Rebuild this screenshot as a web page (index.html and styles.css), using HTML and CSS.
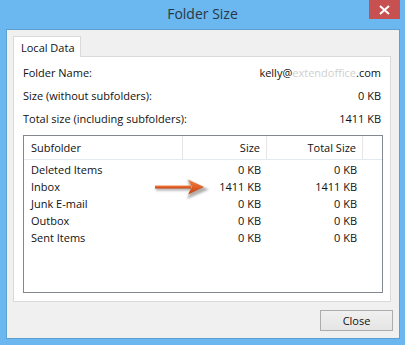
FILE: index.html
```html
<!DOCTYPE html>
<html lang="en">
<head>
  <meta charset="UTF-8">
  <title>Folder Size</title>
  <link rel="stylesheet" href="styles.css">
</head>
<body>
  <div class="window">
    <div class="titlebar">
      <span></span>
      <div class="title">Folder Size</div>
      <div class="close-x">
        <svg width="11" height="10" viewBox="0 0 11 10"><path d="M1 1 L10 9 M10 1 L1 9" stroke="#fff" stroke-width="2"/></svg>
      </div>
    </div>

    <div class="client">
      <div class="tabs">
        <div class="tab">Local Data</div>
      </div>
      <div class="panel">
        <div class="info-row"><span>Folder Name:</span><span>kelly@<span class="mark">extendoffice</span>.com</span></div>
        <div class="info-row"><span>Size (without subfolders):</span><span>0 KB</span></div>
        <div class="info-row"><span>Total size (including subfolders):</span><span>1411 KB</span></div>

        <div class="listview">
          <div class="lv-head">
            <div class="hcell">Subfolder</div>
            <div class="hcell num">Size</div>
            <div class="hcell num">Total Size</div>
            <div class="hcell"></div>
          </div>
          <div class="lv-row first"><div>Deleted Items</div><div class="num">0 KB</div><div class="num">0 KB</div></div>
          <div class="lv-row">
            <div>Inbox</div>
            <div class="num arrow-cell">
              <!-- callout arrow pointing at the Inbox size -->
              <svg class="arrow" width="64" height="24" viewBox="0 0 64 24">
                <defs>
                  <filter id="sh" x="-20%" y="-50%" width="140%" height="200%">
                    <feGaussianBlur stdDeviation="1.3"/>
                  </filter>
                  <linearGradient id="og" x1="0" y1="0" x2="0" y2="1">
                    <stop offset="0" stop-color="#f58545"/>
                    <stop offset="1" stop-color="#c63d0c"/>
                  </linearGradient>
                </defs>
                <path d="M9 12 H46 M43 6 L58 12.5 L43 19 L46 12.5 Z" stroke="#6f6f6f" stroke-width="3" fill="#6f6f6f" opacity="0.55" filter="url(#sh)"/>
                <rect x="8" y="8.5" width="36" height="3" fill="url(#og)"/>
                <path d="M41 2.5 L57 10 L41 17.5 L45 10 Z" fill="url(#og)"/>
              </svg>
              1411 KB
            </div>
            <div class="num">1411 KB</div>
          </div>
          <div class="lv-row"><div>Junk E-mail</div><div class="num">0 KB</div><div class="num">0 KB</div></div>
          <div class="lv-row"><div>Outbox</div><div class="num">0 KB</div><div class="num">0 KB</div></div>
          <div class="lv-row"><div>Sent Items</div><div class="num">0 KB</div><div class="num">0 KB</div></div>
        </div>
      </div>

      <div class="buttons">
        <button class="btn">Close</button>
      </div>
    </div>
  </div>
</body>
</html>
```

FILE: styles.css
```css
body { margin: 0; background: #6ab8ef; font-family: "Open Sans", "Noto Sans", sans-serif; font-size: 11px; color: #111; }
.window { width: 405px; height: 345px; }
.titlebar { display: grid; grid-template-columns: 1fr auto 1fr; height: 29px; }
.title { font-size: 14px; color: #2a3644; padding-top: 4px; }
.close-x { justify-self: end; width: 31px; height: 19px; margin-right: 5px; background: #c75050; display: flex; align-items: center; justify-content: center; }
.close-x svg { display: block; }

.client { margin: 0 5px 0 6px; height: 310px; border: 1px solid #5e9fd0; background: #f0f0f0; padding: 6px 0 0 6px; box-sizing: border-box; }
.tabs { display: flex; height: 21px; position: relative; z-index: 1; }
.tab { width: 68px; height: 21px; border: 1px solid #d9d9d9; border-bottom: none; background: #fff; padding: 3px 0 0 7px; box-sizing: border-box; white-space: nowrap; }

.panel { width: 378px; height: 246px; box-sizing: border-box; margin-top: -1px; border: 1px solid #d9d9d9; background: #fff; padding: 4px 9px 0 9px; }
.info-row { display: flex; justify-content: space-between; height: 23px; line-height: 23px; }
.mark { color: #cfcfcf; }

.listview { margin-top: 5px; width: 360px; height: 158px; border: 1px solid #828790; box-sizing: border-box; }
.lv-head { display: grid; grid-template-columns: 159px 84px 96px 1fr; height: 24px; border-bottom: 1px solid #e3e9f1; box-sizing: border-box; }
.hcell { border-right: 1px solid #e5e5e5; line-height: 23px; padding: 0 6px 0 7px; }
.hcell:last-child { border-right: none; }
.num { text-align: right; }
.lv-row { display: grid; grid-template-columns: 159px 84px 96px; height: 17px; line-height: 17px; }
.lv-row.first { margin-top: 1px; }
.lv-row > div { padding: 0 6px 0 7px; }
.arrow-cell { position: relative; }
.arrow { position: absolute; left: -36px; top: -1px; }

.buttons { display: flex; justify-content: flex-end; padding: 8px 6px 0 0; }
.btn { width: 73px; height: 21px; border: 1px solid #acacac; background: linear-gradient(#f0f0f0, #e5e5e5); font-family: inherit; font-size: 11px; color: #111; padding: 0; }
```
